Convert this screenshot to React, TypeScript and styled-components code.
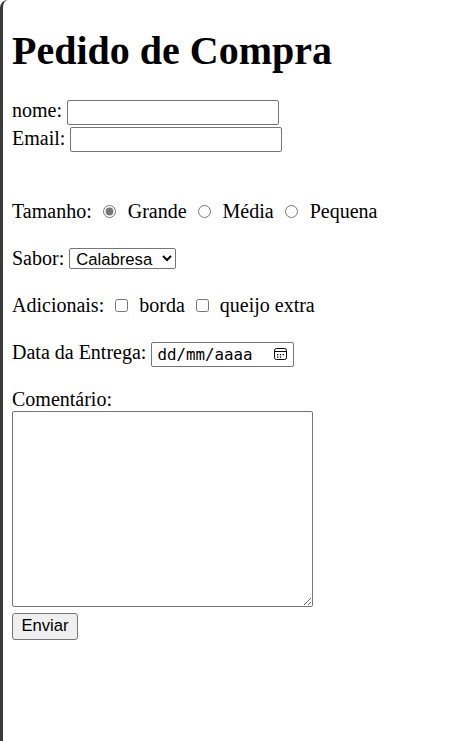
import styled, { createGlobalStyle } from 'styled-components';

const GlobalStyle = createGlobalStyle`
  html, body {
    margin: 0;
    padding: 0;
    background: #ffffff;
  }
  body {
    font-family: 'Liberation Serif', 'Times New Roman', serif;
    font-size: 20px;
    color: #000000;
  }
`

const Page = styled.div`
  min-height: 741px;
  box-sizing: border-box;
  border-left: 3px solid #3b3b3b;
  border-top-left-radius: 8px;
  padding: 1px 8px 8px 9px;
`

const Title = styled.h1`
  font-size: 40px;
  font-weight: bold;
  margin: 26px 0 23px;
`

const Form = styled.form`
  line-height: 26px;
`

const Field = styled.p`
  margin: 20px 0;
  line-height: 27px;
`

const Label = styled.div`
  margin-top: 2px;
  line-height: 24px;
`

const TextInput = styled.input`
  font-family: 'Liberation Sans', Arial, sans-serif;
  font-size: 16.67px;
  width: 212px;
  height: 25px;
  box-sizing: border-box;
  border: 1px solid #767676;
  border-radius: 2px;
  padding: 1px 2px;
  margin: 0;
`

const Radio = styled.input.attrs({ type: 'radio' })`
  accent-color: #767676;
  width: 13px;
  height: 13px;
  margin: 3px 7px 0 6px;
`

const Checkbox = styled.input.attrs({ type: 'checkbox' })`
  accent-color: #767676;
  width: 13px;
  height: 13px;
  margin: 3px 6px 0 6px;
`

const Select = styled.select`
  font-family: 'Liberation Sans', Arial, sans-serif;
  font-size: 16.67px;
  width: 107px;
  height: 21px;
  padding: 0 0 0 2px;
  border: 1px solid #767676;
  border-radius: 2px;
  background: #fff;
  color: #000;
`

const DateBox = styled.span`
  display: inline-flex;
  align-items: center;
  justify-content: space-between;
  width: 143px;
  height: 25px;
  box-sizing: border-box;
  border: 1px solid #767676;
  border-radius: 2px;
  padding: 0 5px 0 5px;
  font-family: 'DejaVu Sans Mono', 'Liberation Mono', monospace;
  font-size: 15.8px;
  vertical-align: middle;
`

const TextArea = styled.textarea`
  display: block;
  width: 301px;
  height: 196px;
  box-sizing: border-box;
  border: 1px solid #767676;
  border-radius: 2px;
  margin: 0 0 6px;
`

const Button = styled.button`
  display: block;
  font-family: 'Liberation Sans', Arial, sans-serif;
  font-size: 16.67px;
  width: 66px;
  height: 27px;
  padding: 0;
  background: #efefef;
  border: 1px solid #767676;
  border-radius: 3px;
  color: #000;
`

const CalendarIcon = () => (
  <svg width="15" height="14" viewBox="0 0 15 14" fill="none">
    <rect x="1.5" y="1.5" width="12" height="11" rx="2" stroke="#000" />
    <line x1="2" y1="4.5" x2="13" y2="4.5" stroke="#000" />
    <rect x="4" y="7" width="1.3" height="1.3" fill="#000" />
    <rect x="6.8" y="7" width="1.3" height="1.3" fill="#000" />
    <rect x="9.6" y="7" width="1.3" height="1.3" fill="#000" />
    <rect x="4" y="9.4" width="1.3" height="1.3" fill="#000" />
    <rect x="6.8" y="9.4" width="1.3" height="1.3" fill="#000" />
  </svg>
)

const App = () => {
  return (
    <>
      <GlobalStyle />
      <Page>
        <Title>Pedido de Compra</Title>
        <Form onSubmit={(e) => e.preventDefault()}>
          nome: <TextInput type="text" />
          <br />
          Email: <TextInput type="text" />
          <br />
          <br />
          <Field>
            Tamanho: <Radio name="tamanho" defaultChecked /> Grande{' '}
            <Radio name="tamanho" /> Média{' '}
            <Radio name="tamanho" /> Pequena
          </Field>
          <Field>
            Sabor:{' '}
            <Select defaultValue="calabresa">
              <option value="calabresa">Calabresa</option>
              <option value="mussarela">Mussarela</option>
              <option value="portuguesa">Portuguesa</option>
            </Select>
          </Field>
          <Field>
            Adicionais: <Checkbox /> borda <Checkbox /> queijo extra
          </Field>
          <Field>
            Data da Entrega:{' '}
            <DateBox>
              <span>dd/mm/aaaa</span>
              <CalendarIcon />
            </DateBox>
          </Field>
          <Label>Comentário:</Label>
          <TextArea />
          <Button type="submit">Enviar</Button>
        </Form>
      </Page>
    </>
  )
}

export default App
